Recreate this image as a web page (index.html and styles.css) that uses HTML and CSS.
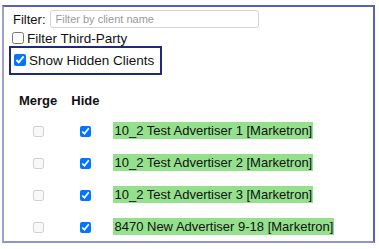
FILE: index.html
```html
<!DOCTYPE html>
<html lang="en">
<head>
    <meta charset="UTF-8">
    <title>Clients</title>
    <link rel="stylesheet" href="styles.css">
</head>
<body>
    <div class="frame">
        <div class="filters">
            <div class="filter-row">
                <label for="client-filter">Filter:</label>
                <input type="text" id="client-filter" placeholder="Filter by client name">
            </div>
            <label class="check-row">
                <input type="checkbox"> Filter Third-Party
            </label>
            <div class="hidden-box">
                <label class="check-row">
                    <input type="checkbox" checked> Show Hidden Clients
                </label>
            </div>
        </div>
        <table class="clients">
            <thead>
                <tr>
                    <th>Merge</th>
                    <th>Hide</th>
                    <th></th>
                </tr>
            </thead>
            <tbody>
                <tr>
                    <td class="box"><input type="checkbox" disabled></td>
                    <td class="box"><input type="checkbox" checked></td>
                    <td><span class="name">10_2 Test Advertiser 1 [Marketron]</span></td>
                </tr>
                <tr>
                    <td class="box"><input type="checkbox" disabled></td>
                    <td class="box"><input type="checkbox" checked></td>
                    <td><span class="name">10_2 Test Advertiser 2 [Marketron]</span></td>
                </tr>
                <tr>
                    <td class="box"><input type="checkbox" disabled></td>
                    <td class="box"><input type="checkbox" checked></td>
                    <td><span class="name">10_2 Test Advertiser 3 [Marketron]</span></td>
                </tr>
                <tr>
                    <td class="box"><input type="checkbox" disabled></td>
                    <td class="box"><input type="checkbox" checked></td>
                    <td><span class="name">8470 New Advertiser 9-18 [Marketron]</span></td>
                </tr>
            </tbody>
        </table>
    </div>
</body>
</html>
```

FILE: styles.css
```css
body {
    margin: 0;
    background: #ffffff;
    color: #111111;
    font-family: 'Liberation Sans', Arial, sans-serif;
    font-size: 13px;
}
.frame {
    margin: 5px 0 0 2px;
    width: 369px;
    height: 234px;
    border: 2px solid #5b62b3;
    border-left-color: #9ea2cc;
    border-bottom-color: #8f94c9;
    box-sizing: content-box;
}
.filters {
    padding: 3px 0 0 7px;
}
.filter-row {
    display: flex;
    align-items: center;
    gap: 4px;
    margin-left: 2px;
}
.filter-row input {
    width: 209px;
    height: 18px;
    box-sizing: border-box;
    border: 1px solid #d4d4d4;
    border-radius: 3px;
    padding: 0 5px;
    font-family: inherit;
    font-size: 11px;
}
.filter-row input::placeholder {
    color: #9a9a9a;
}
.check-row {
    display: flex;
    align-items: center;
    gap: 3px;
    height: 18px;
    margin-top: 1px;
    font-size: 13.5px;
}
.check-row input {
    width: 12px;
    height: 12px;
    margin: 0 0 0 1px;
}
.hidden-box {
    display: inline-block;
    margin: -1px 0 0 -2px;
    padding: 3px 6px 4px 2px;
    border: 2px solid #1f2a78;
}
.hidden-box .check-row {
    margin-top: 0;
}
.clients {
    border-collapse: collapse;
    margin: 18px 0 0 8px;
}
.clients th {
    font-weight: bold;
    padding: 0 7px 6px;
    text-align: center;
}
.clients td {
    height: 32px;
    padding: 0 7px;
}
.clients td.box {
    text-align: center;
}
.clients td.box input {
    width: 11px;
    height: 11px;
    margin: 0;
    vertical-align: middle;
}
.name {
    background: #94e08c;
    padding: 1px 1px;
}
```
